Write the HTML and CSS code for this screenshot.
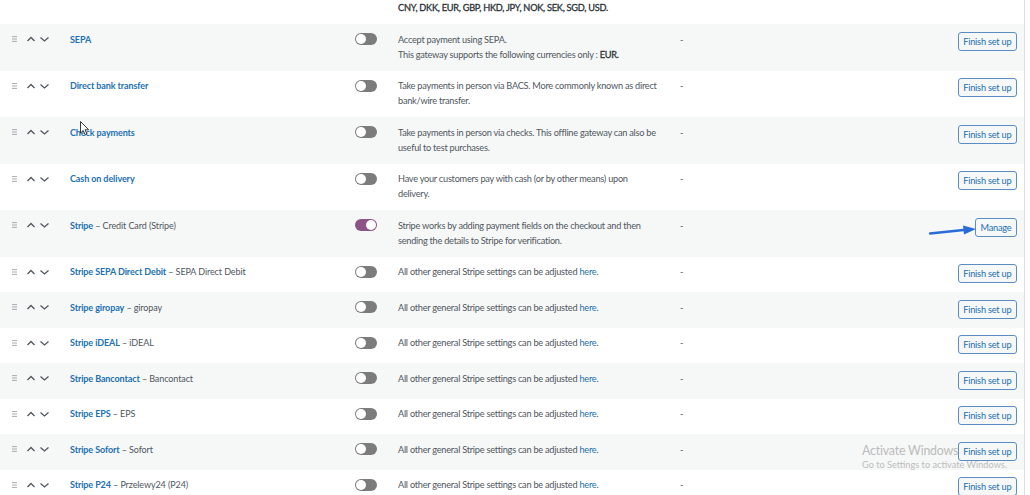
FILE: index.html
```html
<!DOCTYPE html>
<html lang="en">
<head>
    <meta charset="UTF-8">
    <title>Payments</title>
    <link rel="stylesheet" href="styles.css">
</head>
<body>
    <div class="page">
        <div class="gateways">
            <div class="row tail">
                <div></div><div></div><div></div>
                <div class="desc"><strong>CNY, DKK, EUR, GBP, HKD, JPY, NOK, SEK, SGD, USD.</strong></div>
                <div></div><div></div>
            </div>

            <div class="row">
                <div class="sort"><svg width="40" height="10" viewBox="0 0 40 10"><path class="grip" d="M1 2.6h5M1 5h5M1 7.4h5"/><path class="chev" d="M16.5 7L20 3.5 23.5 7M29.5 3.5L33.5 7 37.5 3.5"/></svg></div>
                <div class="name"><a href="#">SEPA</a></div>
                <div><span class="toggle"></span></div>
                <div class="desc">Accept payment using SEPA.<br>This gateway supports the following currencies only : <strong>EUR.</strong></div>
                <div class="dash">-</div>
                <div class="action"><button>Finish set up</button></div>
            </div>

            <div class="row">
                <div class="sort"><svg width="40" height="10" viewBox="0 0 40 10"><path class="grip" d="M1 2.6h5M1 5h5M1 7.4h5"/><path class="chev" d="M16.5 7L20 3.5 23.5 7M29.5 3.5L33.5 7 37.5 3.5"/></svg></div>
                <div class="name"><a href="#">Direct bank transfer</a></div>
                <div><span class="toggle"></span></div>
                <div class="desc">Take payments in person via BACS. More commonly known as direct bank/wire transfer.</div>
                <div class="dash">-</div>
                <div class="action"><button>Finish set up</button></div>
            </div>

            <div class="row">
                <div class="sort"><svg width="40" height="10" viewBox="0 0 40 10"><path class="grip" d="M1 2.6h5M1 5h5M1 7.4h5"/><path class="chev" d="M16.5 7L20 3.5 23.5 7M29.5 3.5L33.5 7 37.5 3.5"/></svg></div>
                <div class="name"><a href="#">Check payments</a></div>
                <div><span class="toggle"></span></div>
                <div class="desc">Take payments in person via checks. This offline gateway can also be useful to test purchases.</div>
                <div class="dash">-</div>
                <div class="action"><button>Finish set up</button></div>
            </div>

            <div class="row">
                <div class="sort"><svg width="40" height="10" viewBox="0 0 40 10"><path class="grip" d="M1 2.6h5M1 5h5M1 7.4h5"/><path class="chev" d="M16.5 7L20 3.5 23.5 7M29.5 3.5L33.5 7 37.5 3.5"/></svg></div>
                <div class="name"><a href="#">Cash on delivery</a></div>
                <div><span class="toggle"></span></div>
                <div class="desc">Have your customers pay with cash (or by other means) upon delivery.</div>
                <div class="dash">-</div>
                <div class="action"><button>Finish set up</button></div>
            </div>

            <div class="row">
                <div class="sort"><svg width="40" height="10" viewBox="0 0 40 10"><path class="grip" d="M1 2.6h5M1 5h5M1 7.4h5"/><path class="chev" d="M16.5 7L20 3.5 23.5 7M29.5 3.5L33.5 7 37.5 3.5"/></svg></div>
                <div class="name"><a href="#">Stripe</a> – Credit Card (Stripe)</div>
                <div><span class="toggle on"></span></div>
                <div class="desc">Stripe works by adding payment fields on the checkout and then sending the details to Stripe for verification.</div>
                <div class="dash">-</div>
                <div class="action"><button>Manage</button></div>
            </div>

            <div class="row">
                <div class="sort"><svg width="40" height="10" viewBox="0 0 40 10"><path class="grip" d="M1 2.6h5M1 5h5M1 7.4h5"/><path class="chev" d="M16.5 7L20 3.5 23.5 7M29.5 3.5L33.5 7 37.5 3.5"/></svg></div>
                <div class="name"><a href="#">Stripe SEPA Direct Debit</a> – SEPA Direct Debit</div>
                <div><span class="toggle"></span></div>
                <div class="desc">All other general Stripe settings can be adjusted <a href="#">here</a>.</div>
                <div class="dash">-</div>
                <div class="action"><button>Finish set up</button></div>
            </div>

            <div class="row">
                <div class="sort"><svg width="40" height="10" viewBox="0 0 40 10"><path class="grip" d="M1 2.6h5M1 5h5M1 7.4h5"/><path class="chev" d="M16.5 7L20 3.5 23.5 7M29.5 3.5L33.5 7 37.5 3.5"/></svg></div>
                <div class="name"><a href="#">Stripe giropay</a> – giropay</div>
                <div><span class="toggle"></span></div>
                <div class="desc">All other general Stripe settings can be adjusted <a href="#">here</a>.</div>
                <div class="dash">-</div>
                <div class="action"><button>Finish set up</button></div>
            </div>

            <div class="row">
                <div class="sort"><svg width="40" height="10" viewBox="0 0 40 10"><path class="grip" d="M1 2.6h5M1 5h5M1 7.4h5"/><path class="chev" d="M16.5 7L20 3.5 23.5 7M29.5 3.5L33.5 7 37.5 3.5"/></svg></div>
                <div class="name"><a href="#">Stripe iDEAL</a> – iDEAL</div>
                <div><span class="toggle"></span></div>
                <div class="desc">All other general Stripe settings can be adjusted <a href="#">here</a>.</div>
                <div class="dash">-</div>
                <div class="action"><button>Finish set up</button></div>
            </div>

            <div class="row">
                <div class="sort"><svg width="40" height="10" viewBox="0 0 40 10"><path class="grip" d="M1 2.6h5M1 5h5M1 7.4h5"/><path class="chev" d="M16.5 7L20 3.5 23.5 7M29.5 3.5L33.5 7 37.5 3.5"/></svg></div>
                <div class="name"><a href="#">Stripe Bancontact</a> – Bancontact</div>
                <div><span class="toggle"></span></div>
                <div class="desc">All other general Stripe settings can be adjusted <a href="#">here</a>.</div>
                <div class="dash">-</div>
                <div class="action"><button>Finish set up</button></div>
            </div>

            <div class="row">
                <div class="sort"><svg width="40" height="10" viewBox="0 0 40 10"><path class="grip" d="M1 2.6h5M1 5h5M1 7.4h5"/><path class="chev" d="M16.5 7L20 3.5 23.5 7M29.5 3.5L33.5 7 37.5 3.5"/></svg></div>
                <div class="name"><a href="#">Stripe EPS</a> – EPS</div>
                <div><span class="toggle"></span></div>
                <div class="desc">All other general Stripe settings can be adjusted <a href="#">here</a>.</div>
                <div class="dash">-</div>
                <div class="action"><button>Finish set up</button></div>
            </div>

            <div class="row">
                <div class="sort"><svg width="40" height="10" viewBox="0 0 40 10"><path class="grip" d="M1 2.6h5M1 5h5M1 7.4h5"/><path class="chev" d="M16.5 7L20 3.5 23.5 7M29.5 3.5L33.5 7 37.5 3.5"/></svg></div>
                <div class="name"><a href="#">Stripe Sofort</a> – Sofort</div>
                <div><span class="toggle"></span></div>
                <div class="desc">All other general Stripe settings can be adjusted <a href="#">here</a>.</div>
                <div class="dash">-</div>
                <div class="action"><button>Finish set up</button></div>
            </div>

            <div class="row">
                <div class="sort"><svg width="40" height="10" viewBox="0 0 40 10"><path class="grip" d="M1 2.6h5M1 5h5M1 7.4h5"/><path class="chev" d="M16.5 7L20 3.5 23.5 7M29.5 3.5L33.5 7 37.5 3.5"/></svg></div>
                <div class="name"><a href="#">Stripe P24</a> – Przelewy24 (P24)</div>
                <div><span class="toggle"></span></div>
                <div class="desc">All other general Stripe settings can be adjusted <a href="#">here</a>.</div>
                <div class="dash">-</div>
                <div class="action"><button>Finish set up</button></div>
            </div>
        </div>

        <!-- annotation arrow pointing at Manage -->
        <svg class="arrow" width="50" height="14" viewBox="0 0 50 14">
            <path d="M2 9.5L38 5.8" stroke="#2a6bd8" stroke-width="2.4" stroke-linecap="round"/>
            <path d="M35 1.5L48 5 36 10.5Z" fill="#2a6bd8"/>
        </svg>

        <svg class="cursor" width="12" height="16" viewBox="0 0 12 16">
            <path d="M0.5 0.5V12L3.2 9.5 5.2 13.8 7 13 5 8.8H8.7Z" fill="#fff" stroke="#222" stroke-width="0.9" stroke-linejoin="round"/>
        </svg>

        <div class="watermark">
            <div class="wm-title">Activate Windows</div>
            <div class="wm-sub">Go to Settings to activate Windows.</div>
        </div>
    </div>
</body>
</html>
```

FILE: styles.css
```css
body {
    margin: 0;
    background: #fff;
    font-family: Lato, "Open Sans", sans-serif;
    font-size: 9.2px;
    color: #50575e;
}

.page {
    position: relative;
    width: 1024px;
    height: 495px;
    overflow: hidden;
    border-right: 1px solid #dcdcde;
}

.row {
    display: grid;
    grid-template-columns: 70px 285px 43px 282px 1fr auto;
    align-items: start;
    padding: 7.5px 7px 9px 0;
    line-height: 15px;
    background: #fff;
}

.row:nth-child(even) {
    background: #f6f7f7;
}

.row.tail {
    padding-top: 0;
}

.sort {
    padding-left: 11px;
    height: 15px;
    display: flex;
    align-items: center;
}

.grip {
    stroke: #9ea3a8;
    stroke-width: 0.9;
    fill: none;
}

.chev {
    stroke: #50575e;
    stroke-width: 1.3;
    fill: none;
}

.name {
    font-size: 9px;
    letter-spacing: -0.1px;
    color: #50575e;
}

.name a {
    color: #2271b1;
    font-weight: 700;
    text-decoration: none;
}

.toggle {
    display: block;
    position: relative;
    width: 22px;
    height: 12px;
    margin-top: 1.5px;
    border-radius: 6px;
    background: #7c7c7c;
}

.toggle::after {
    content: "";
    position: absolute;
    left: 1px;
    top: 1px;
    width: 10px;
    height: 10px;
    border-radius: 50%;
    background: #fff;
}

.toggle.on {
    background: #8b5386;
}

.toggle.on::after {
    left: 11px;
}

.desc {
    padding-right: 20px;
    letter-spacing: -0.25px;
}

.desc strong {
    color: #2c3338;
    font-weight: 400;
    -webkit-text-stroke: 0.3px #2c3338;
}

.desc a {
    color: #2271b1;
    text-decoration: none;
}

.dash {
    color: #50575e;
}

.action {
    justify-self: end;
}

button {
    height: 19px;
    padding: 0 4.5px;
    font-family: inherit;
    font-size: 9.2px;
    letter-spacing: -0.2px;
    line-height: 17px;
    color: #2271b1;
    background: #f6f7f7;
    border: 1px solid #5a8ec2;
    border-radius: 3px;
    cursor: pointer;
}

.arrow {
    position: absolute;
    left: 928px;
    top: 224px;
}

.cursor {
    position: absolute;
    left: 80px;
    top: 121px;
}

.watermark {
    position: absolute;
    left: 862px;
    top: 443px;
    color: #bcbcbc;
    pointer-events: none;
}

.wm-title {
    font-size: 12.4px;
    letter-spacing: -0.2px;
    line-height: 16px;
}

.wm-sub {
    font-size: 9.2px;
    line-height: 12px;
}
```
